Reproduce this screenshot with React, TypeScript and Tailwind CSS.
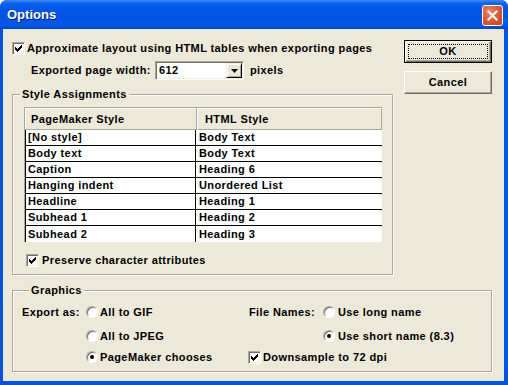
import React from "react"

function Check() {
  const cols = [2, 3, 4, 3, 2, 1, 0]
  return (
    <span className="flex size-[13px] shrink-0 items-center justify-center border border-t-[#ACA899] border-l-[#ACA899] border-r-white border-b-white bg-white shadow-[inset_1px_1px_0_#716F64,inset_-1px_-1px_0_#F1EFE2]">
      <svg width="7" height="7" viewBox="0 0 7 7" shapeRendering="crispEdges">
        {cols.map((y, x) => (
          <rect key={x} x={x} y={y} width="1" height="3" fill="#000" />
        ))}
      </svg>
    </span>
  )
}

function Radio({ on }: { on?: boolean }) {
  return (
    <span className="flex size-[12px] shrink-0 items-center justify-center rounded-full border border-t-[#ACA899] border-l-[#ACA899] border-r-white border-b-white bg-white shadow-[inset_1px_1px_0_#716F64]">
      {on && <span className="size-[4px] rounded-full bg-black" />}
    </span>
  )
}

function Group({ title, className, children }: { title: string; className?: string; children: React.ReactNode }) {
  return (
    <fieldset
      className={
        "border border-[#ACA899] shadow-[inset_1px_1px_0_#fff,1px_1px_0_#fff] " + (className ?? "")
      }
    >
      <legend className="ml-[7px] bg-[#ECE9D8] px-[2px] leading-[13px]">{title}</legend>
      {children}
    </fieldset>
  )
}

const rows = [
  ["[No style]", "Body Text"],
  ["Body text", "Body Text"],
  ["Caption", "Heading 6"],
  ["Hanging indent", "Unordered List"],
  ["Headline", "Heading 1"],
  ["Subhead 1", "Heading 2"],
  ["Subhead 2", "Heading 3"],
]

export default function App() {
  return (
    <div className="flex h-[385px] w-[508px] flex-col overflow-hidden rounded-t-[7px] bg-[#0054E3] font-['Liberation_Sans',Arial,sans-serif] text-[11px] font-bold tracking-[0.4px] text-black">
      {/* title bar */}
      <div className="flex h-[29px] shrink-0 items-center justify-between bg-[linear-gradient(to_bottom,#3D8BFF_0%,#0A62F0_12%,#0058E8_30%,#0054E3_60%,#0058EC_85%,#0048C8_100%)] pl-[7px] pr-[5px]">
        <span className="text-[13px] leading-none tracking-normal text-white [text-shadow:1px_1px_0_#0A1E6E]">Options</span>
        <span className="mt-[1px] flex size-[21px] items-center justify-center rounded-[3px] border border-white bg-[radial-gradient(circle_at_35%_30%,#F08A6A_0%,#E05A30_45%,#C73E1D_100%)]">
          <svg width="11" height="11" viewBox="0 0 11 11">
            <path d="M1.5 1.5l8 8M9.5 1.5l-8 8" stroke="#fff" strokeWidth="2.2" strokeLinecap="square" />
          </svg>
        </span>
      </div>

      {/* body */}
      <div className="mb-[4px] ml-[3px] mr-[4px] flex flex-1 flex-col bg-[#ECE9D8] pl-[9px]">
        <div className="flex">
          <div className="flex w-[381px] flex-col">
            <label className="mt-[13px] flex h-[13px] items-center gap-[2px]">
              <Check />
              <span>Approximate layout using HTML tables when exporting pages</span>
            </label>
            <div className="mt-[6px] flex h-[19px] items-center pl-[19px]">
              <span className="w-[124px]">Exported page width:</span>
              <span className="flex h-[19px] w-[89px] items-center justify-between border border-t-[#ACA899] border-l-[#ACA899] border-r-white border-b-white bg-white pl-[3px] pr-[1px] shadow-[inset_1px_1px_0_#716F64,inset_-1px_-1px_0_#F1EFE2]">
                <span>612</span>
                <span className="flex h-[15px] w-[16px] items-center justify-center border border-t-[#F1EFE2] border-l-[#F1EFE2] border-r-[#000] border-b-[#000] bg-[#ECE9D8] shadow-[inset_1px_1px_0_#fff,inset_-1px_-1px_0_#ACA899]">
                  <svg width="7" height="4" viewBox="0 0 7 4">
                    <path d="M0 0h7L3.5 4z" fill="#000" />
                  </svg>
                </span>
              </span>
              <span className="ml-[6px]">pixels</span>
            </div>

            <Group title="Style Assignments" className="mt-[8px] pb-[7px]">
              <div className="ml-[11px] mt-[6px] w-[358px] border-l border-t border-[#ACA899]">
                <div className="flex h-[22px]">
                  <div className="flex w-[172px] items-center border border-t-white border-l-white border-r-[#ACA899] border-b-[#ACA899] pl-[5px]">
                    PageMaker Style
                  </div>
                  <div className="flex flex-1 items-center border border-t-white border-l-white border-r-[#ACA899] border-b-[#ACA899] pl-[7px]">
                    HTML Style
                  </div>
                </div>
                <div className="border-l border-black bg-white">
                  {rows.map(([a, b], i) => (
                    <div
                      key={a}
                      className={"flex h-[16px] items-center " + (i < rows.length - 1 ? "border-b border-black" : "")}
                    >
                      <span className="flex h-full w-[170px] items-center border-r border-black pl-[2px]">{a}</span>
                      <span className="pl-[3px]">{b}</span>
                    </div>
                  ))}
                </div>
              </div>
              <label className="ml-[13px] mt-[12px] flex h-[13px] items-center gap-[3px]">
                <Check />
                <span>Preserve character attributes</span>
              </label>
            </Group>
          </div>

          <div className="ml-[11px] flex flex-col">
            <button className="mt-[11px] flex h-[23px] w-[88px] items-center justify-center border border-black bg-[#ECE9D8] p-[3px] shadow-[inset_1px_1px_0_#fff,inset_-1px_-1px_0_#716F64,inset_-2px_-2px_0_#ACA899]">
              <span className="flex h-full w-full items-center justify-center border border-dotted border-black">OK</span>
            </button>
            <button className="mt-[8px] flex h-[23px] w-[88px] items-center justify-center border border-t-white border-l-white border-r-[#716F64] border-b-[#716F64] bg-[#ECE9D8] shadow-[inset_-1px_-1px_0_#ACA899]">
              Cancel
            </button>
          </div>
        </div>

        <Group title="Graphics" className="mt-[9px] w-[480px] pb-[7px] pl-[9px]">
          <div className="mt-[5px] grid grid-cols-[64px_163px_74px_1fr] grid-rows-[20px_28px_14px]">
            <span className="flex items-center">Export as:</span>
            <label className="flex items-center gap-[2px]">
              <Radio />
              All to GIF
            </label>
            <span className="flex items-center">File Names:</span>
            <label className="flex items-center gap-[3px]">
              <Radio />
              Use long name
            </label>

            <span />
            <label className="flex items-center gap-[2px]">
              <Radio />
              All to JPEG
            </label>
            <span />
            <label className="flex items-center gap-[3px]">
              <Radio on />
              Use short name (8.3)
            </label>

            <span />
            <label className="flex items-center gap-[2px]">
              <Radio on />
              PageMaker chooses
            </label>
            <label className="col-span-2 -ml-[1px] flex items-center gap-[2px]">
              <Check />
              Downsample to 72 dpi
            </label>
          </div>
        </Group>
      </div>
    </div>
  )
}
